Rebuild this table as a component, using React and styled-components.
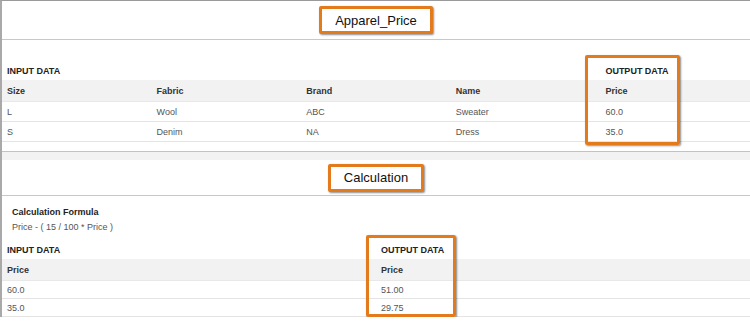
import React from "react";
import styled, { createGlobalStyle } from "styled-components";

const GlobalStyle = createGlobalStyle`
  html, body {
    margin: 0;
    padding: 0;
    background: #ffffff;
    font-family: "Liberation Sans", Arial, sans-serif;
  }
`;

const Page = styled.div`
  width: 750px;
  box-sizing: border-box;
  border-left: 2px solid #a9a9a9;
  border-top: 1px solid #9a9a9a;
`;

const Panel = styled.section`
  background: #fff;
  padding-bottom: ${(p) => p.$bottom || 0}px;
`;

const TitleBar = styled.div`
  height: ${(p) => p.$height}px;
  display: flex;
  align-items: center;
  justify-content: center;
  border-bottom: 1px solid #c8c8c8;
  box-sizing: border-box;
`;

const TitleBox = styled.div`
  height: 28px;
  box-sizing: border-box;
  padding: 0 13px;
  display: flex;
  align-items: center;
  border: 3px solid #e37b1c;
  border-radius: 2px;
  box-shadow: 1px 1px 2px rgba(0, 0, 0, 0.45);
  font-size: 13px;
  color: #111;
  background: #fff;
`;

const Spacer = styled.div`
  height: ${(p) => p.$h}px;
`;

const Gap = styled.div`
  height: 8px;
  background: #f2f2f2;
  border-top: 1px solid #c2c2c2;
`;

const Formula = styled.div`
  padding: 12px 0 0 10px;
  display: flex;
  flex-direction: column;
  gap: 6px;
  margin-bottom: 9px;
`;

const FormulaLabel = styled.div`
  font-size: 9px;
  font-weight: bold;
  color: #222;
  line-height: 9px;
`;

const FormulaText = styled.div`
  font-size: 9px;
  color: #555;
  line-height: 9px;
`;

const Table = styled.table`
  width: 100%;
  table-layout: fixed;
  border-collapse: collapse;
  font-size: 9px;
`;

const GroupCell = styled.th`
  position: relative;
  height: 18px;
  padding: 0 5px;
  text-align: left;
  font-weight: bold;
  color: #222;
  text-transform: uppercase;
  vertical-align: middle;
`;

const HeadCell = styled.th`
  height: 21px;
  padding: 0 5px;
  text-align: left;
  font-weight: bold;
  color: #333;
  background: #f2f2f2;
  border-bottom: 1px solid #e8e8e8;
`;

const Cell = styled.td`
  height: ${(p) => p.$h}px;
  padding: 0 5px;
  color: #555;
  border-bottom: 1px solid #e4e4e4;
  box-sizing: border-box;
`;

const Highlight = styled.div`
  position: absolute;
  left: ${(p) => p.$left}px;
  top: ${(p) => p.$top}px;
  width: ${(p) => p.$width}px;
  height: ${(p) => p.$height}px;
  box-sizing: border-box;
  border: 3px solid #e37b1c;
  border-radius: 2px;
  box-shadow: 1px 1px 2px rgba(0, 0, 0, 0.45);
  pointer-events: none;
`;

const DataTable = ({ columns, rows, rowHeight, box }) => (
  <Table>
    <thead>
      <tr>
        <GroupCell colSpan={columns.length - 1}>Input Data</GroupCell>
        <GroupCell>
          Output Data
          <Highlight
            $left={box.left}
            $top={box.top}
            $width={box.width}
            $height={box.height}
          />
        </GroupCell>
      </tr>
      <tr>
        {columns.map((c) => (
          <HeadCell key={c}>{c}</HeadCell>
        ))}
      </tr>
    </thead>
    <tbody>
      {rows.map((r, i) => (
        <tr key={i}>
          {r.map((v, j) => (
            <Cell key={j} $h={rowHeight}>
              {v}
            </Cell>
          ))}
        </tr>
      ))}
    </tbody>
  </Table>
);

const App = () => (
  <Page>
    <GlobalStyle />
    <Panel $bottom={9}>
      <TitleBar $height={39}>
        <TitleBox>Apparel_Price</TitleBox>
      </TitleBar>
      <Spacer $h={22} />
      <DataTable
        columns={["Size", "Fabric", "Brand", "Name", "Price"]}
        rows={[
          ["L", "Wool", "ABC", "Sweater", "60.0"],
          ["S", "Denim", "NA", "Dress", "35.0"],
        ]}
        rowHeight={20}
        box={{ left: -15, top: -7, width: 95, height: 90 }}
      />
    </Panel>
    <Gap />
    <Panel>
      <TitleBar $height={36}>
        <TitleBox>Calculation</TitleBox>
      </TitleBar>
      <Formula>
        <FormulaLabel>Calculation Formula</FormulaLabel>
        <FormulaText>Price - ( 15 / 100 * Price )</FormulaText>
      </Formula>
      <DataTable
        columns={["Price", "Price"]}
        rows={[
          ["60.0", "51.00"],
          ["35.0", "29.75"],
        ]}
        rowHeight={18}
        box={{ left: -10, top: -6, width: 90, height: 82 }}
      />
    </Panel>
  </Page>
);

export default App;
